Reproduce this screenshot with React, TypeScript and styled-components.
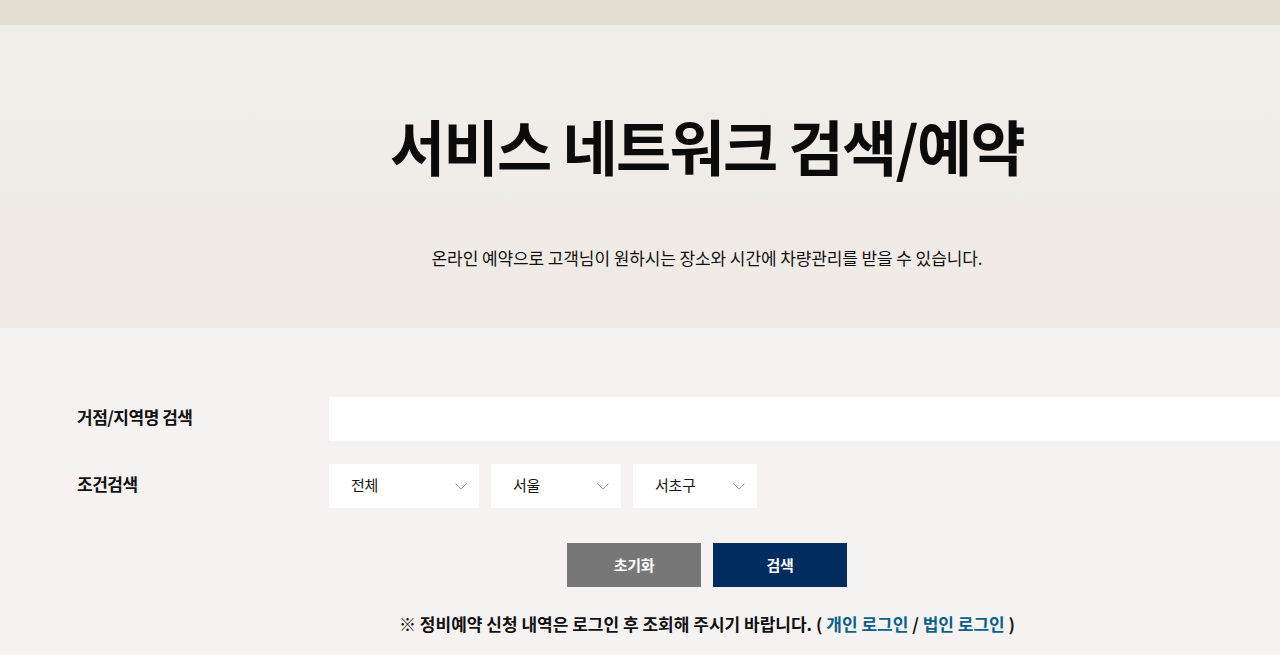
import styled, { createGlobalStyle } from 'styled-components'

const GlobalStyle = createGlobalStyle`
  html, body {
    margin: 0;
    padding: 0;
    overflow: hidden;
    background: #f6f2f1;
  }
  body {
    font-family: 'Noto Sans CJK KR', 'Noto Sans', sans-serif;
    color: #111;
  }
  * {
    box-sizing: border-box;
  }
`

// 화면보다 넓은 컨텐츠 영역 (원본 레이아웃 기준)
const Page = styled.div`
  width: 1414px;
`

const TopBar = styled.div`
  height: 25px;
  background: #e4ddd1;
`

const Hero = styled.section`
  height: 303px;
  padding-top: 86px;
  display: flex;
  flex-direction: column;
  align-items: center;
  background: linear-gradient(#f1ede8, #efeae5);
`

const Title = styled.h2`
  margin: 0;
  font-size: 60px;
  line-height: 68px;
  font-weight: 700;
  letter-spacing: -1.7px;
  color: #0b0b0b;
`

const Desc = styled.p`
  margin: 67px 0 0;
  font-size: 17px;
  line-height: 24px;
  letter-spacing: -0.1px;
  color: #111;
`

const Form = styled.section`
  padding: 69px 77px 40px;
  display: flex;
  flex-direction: column;
`

const Row = styled.div<{ $gap?: number }>`
  display: flex;
  align-items: center;
  margin-top: ${p => p.$gap ?? 0}px;
`

const Label = styled.label`
  width: 252px;
  flex-shrink: 0;
  padding-bottom: 5px;
  font-size: 17px;
  font-weight: 700;
  letter-spacing: -0.5px;
  color: #111;
`

const TextInput = styled.input`
  flex: 1;
  height: 44px;
  border: none;
  outline: none;
  background: #fff;
  padding: 0 22px;
  font-size: 15px;
  font-family: inherit;
`

const SelectGroup = styled.div`
  display: flex;
  gap: 12px;
`

const SelectBox = styled.div<{ $w: number }>`
  width: ${p => p.$w}px;
  height: 44px;
  background: #fff;
  display: flex;
  align-items: center;
  justify-content: space-between;
  padding: 0 12px 0 22px;
  font-size: 15px;
  letter-spacing: -0.3px;
  color: #151515;
  cursor: pointer;
`

const SelectText = styled.span`
  padding-bottom: 4px;
`

const Chevron = () => (
  <svg width="12" height="7" viewBox="0 0 12 7" fill="none">
    <path d="M0.5 0.5 L6 6 L11.5 0.5" stroke="#9a9a9a" strokeWidth="1" />
  </svg>
)

const Buttons = styled.div`
  display: flex;
  justify-content: center;
  gap: 12px;
  margin-top: 35px;
`

const Btn = styled.button<{ $primary?: boolean }>`
  width: 134px;
  height: 44px;
  padding: 0 0 2px;
  border: none;
  background: ${p => (p.$primary ? '#002c5f' : '#777777')};
  color: #fff;
  font-family: inherit;
  font-size: 15px;
  font-weight: 700;
  letter-spacing: -0.3px;
  cursor: pointer;
`

const Notice = styled.p`
  margin: 25px 0 0;
  text-align: center;
  font-size: 17px;
  line-height: 24px;
  font-weight: 700;
  letter-spacing: 0;
  color: #111;
`

const LoginLink = styled.a`
  color: #0a6188;
  text-decoration: none;
`

const selects = [
  { label: '전체', width: 150 },
  { label: '서울', width: 130 },
  { label: '서초구', width: 124 },
]

const App = () => {
  return (
    <Page>
      <GlobalStyle />
      <TopBar />
      <Hero>
        <Title>서비스 네트워크 검색/예약</Title>
        <Desc>
          온라인 예약으로 고객님이 원하시는 장소와 시간에 차량관리를 받을 수 있습니다.
        </Desc>
      </Hero>
      <Form>
        <Row>
          <Label>거점/지역명 검색</Label>
          <TextInput type="text" />
        </Row>
        <Row $gap={23}>
          <Label>조건검색</Label>
          <SelectGroup>
            {selects.map(s => (
              <SelectBox key={s.label} $w={s.width}>
                <SelectText>{s.label}</SelectText>
                <Chevron />
              </SelectBox>
            ))}
          </SelectGroup>
        </Row>
        <Buttons>
          <Btn>초기화</Btn>
          <Btn $primary>검색</Btn>
        </Buttons>
        <Notice>
          ※ 정비예약 신청 내역은 로그인 후 조회해 주시기 바랍니다. ({' '}
          <LoginLink href="#">개인 로그인</LoginLink> /{' '}
          <LoginLink href="#">법인 로그인</LoginLink> )
        </Notice>
      </Form>
    </Page>
  )
}

export default App
